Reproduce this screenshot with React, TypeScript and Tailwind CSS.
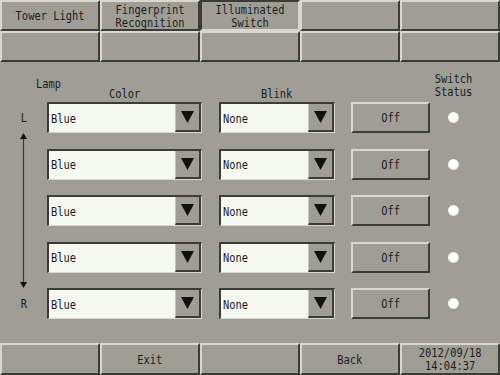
import React from 'react';

// HMI panel: Illuminated Switch settings

const Txt = ({ children, className = '' }: { children: React.ReactNode; className?: string }) => (
  <span className={`inline-block scale-x-[0.8] ${className}`}>{children}</span>
);

type BtnProps = {
  children?: React.ReactNode;
  pressed?: boolean;
  className?: string;
};

function PanelButton({ children, pressed, className = '' }: BtnProps) {
  const edge = pressed
    ? 'border-t-2 border-l-2 border-b-2 border-r-2 border-t-[#3c3c37] border-l-[#3c3c37] border-b-[#d8d8d0] border-r-[#d8d8d0]'
    : 'border-t-2 border-l-2 border-b-2 border-r-2 border-t-[#d8d8d0] border-l-[#d8d8d0] border-b-[#3c3c37] border-r-[#3c3c37]';
  return (
    <div className={`flex items-center justify-center text-center bg-[#9e9e96] ${edge} ${className}`}>
      {children && <Txt>{children}</Txt>}
    </div>
  );
}

function DownArrow() {
  return (
    <svg width="13" height="12" viewBox="0 0 13 12">
      <polygon points="0,0 13,0 6.5,12" fill="#111" />
    </svg>
  );
}

function Combo({ value, width }: { value: string; width: string }) {
  return (
    <div
      className={`flex h-[31px] ${width} border-t-2 border-l-2 border-b border-r border-t-[#3c3c37] border-l-[#3c3c37] border-b-[#d8d8d0] border-r-[#d8d8d0]`}
    >
      <div className="flex-1 bg-[#f6f9f2] flex items-center pl-[2px]">
        <Txt className="origin-left">{value}</Txt>
      </div>
      <div className="w-[26px] bg-[#9e9e96] border-l border-l-[#c4c4bc] border-r-2 border-b-2 border-r-[#3c3c37] border-b-[#3c3c37] flex items-center justify-center">
        <DownArrow />
      </div>
    </div>
  );
}

function Lamp() {
  return (
    <div className="w-[11px] h-[11px] rounded-full bg-[radial-gradient(circle_at_45%_45%,#ffffff_45%,#d4d4cc_80%,#8a8a84_100%)]" />
  );
}

export default function App() {
  const rows = [0, 1, 2, 3, 4];
  return (
    <div className="w-[500px] h-[375px] bg-[#9e9e96] flex flex-col overflow-hidden text-[#1c1c1a] font-['DejaVu_Sans_Mono',monospace] text-[13px] leading-[13px]">
      {/* tabs */}
      <div className="grid grid-cols-5 grid-rows-[31px_31px] h-[62px]">
        <PanelButton>Tower Light</PanelButton>
        <PanelButton>
          Fingerprint
          <br />
          Recognition
        </PanelButton>
        <PanelButton pressed>
          Illuminated
          <br />
          Switch
        </PanelButton>
        <PanelButton />
        <PanelButton />
        <PanelButton />
        <PanelButton />
        <PanelButton />
        <PanelButton />
        <PanelButton />
      </div>

      {/* main */}
      <div className="flex-1 flex flex-col">
        <div className="grid grid-cols-[47px_172px_132px_79px_46px] h-[40px]">
          <div className="mt-[15px] pl-[36px] whitespace-nowrap">
            <Txt className="origin-left">Lamp</Txt>
          </div>
          <div className="mt-[25px] w-[155px] text-center">
            <Txt>Color</Txt>
          </div>
          <div className="mt-[25px] w-[116px] text-center">
            <Txt>Blink</Txt>
          </div>
          <div />
          <div className="mt-[10px] text-center">
            <Txt>
              Switch
              <br />
              Status
            </Txt>
          </div>
        </div>

        <div className="flex">
          <div className="w-[47px] flex flex-col items-center">
            <div className="h-[31px] flex items-center">
              <Txt>L</Txt>
            </div>
            <div className="flex-1 flex justify-center">
              <svg width="9" height="155" viewBox="0 0 9 155">
                <line x1="4.5" y1="4" x2="4.5" y2="151" stroke="#3a3a36" strokeWidth="1.2" />
                <polygon points="4.5,0 1,6 8,6" fill="#111" />
                <polygon points="4.5,155 1,149 8,149" fill="#111" />
              </svg>
            </div>
            <div className="h-[31px] flex items-center">
              <Txt>R</Txt>
            </div>
          </div>

          <div className="flex flex-col gap-[15.5px]">
            {rows.map((r) => (
              <div key={r} className="flex h-[31px] items-center">
                <div className="w-[172px]">
                  <Combo value="Blue" width="w-[155px]" />
                </div>
                <div className="w-[132px]">
                  <Combo value="None" width="w-[116px]" />
                </div>
                <PanelButton className="w-[79px] h-[31px]">Off</PanelButton>
                <div className="w-[46px] flex justify-center">
                  <Lamp />
                </div>
              </div>
            ))}
          </div>
        </div>
      </div>

      {/* bottom bar */}
      <div className="grid grid-cols-5 h-[32px]">
        <PanelButton />
        <PanelButton>Exit</PanelButton>
        <PanelButton />
        <PanelButton>Back</PanelButton>
        <PanelButton>
          2012/09/18
          <br />
          14:04:37
        </PanelButton>
      </div>
    </div>
  );
}
